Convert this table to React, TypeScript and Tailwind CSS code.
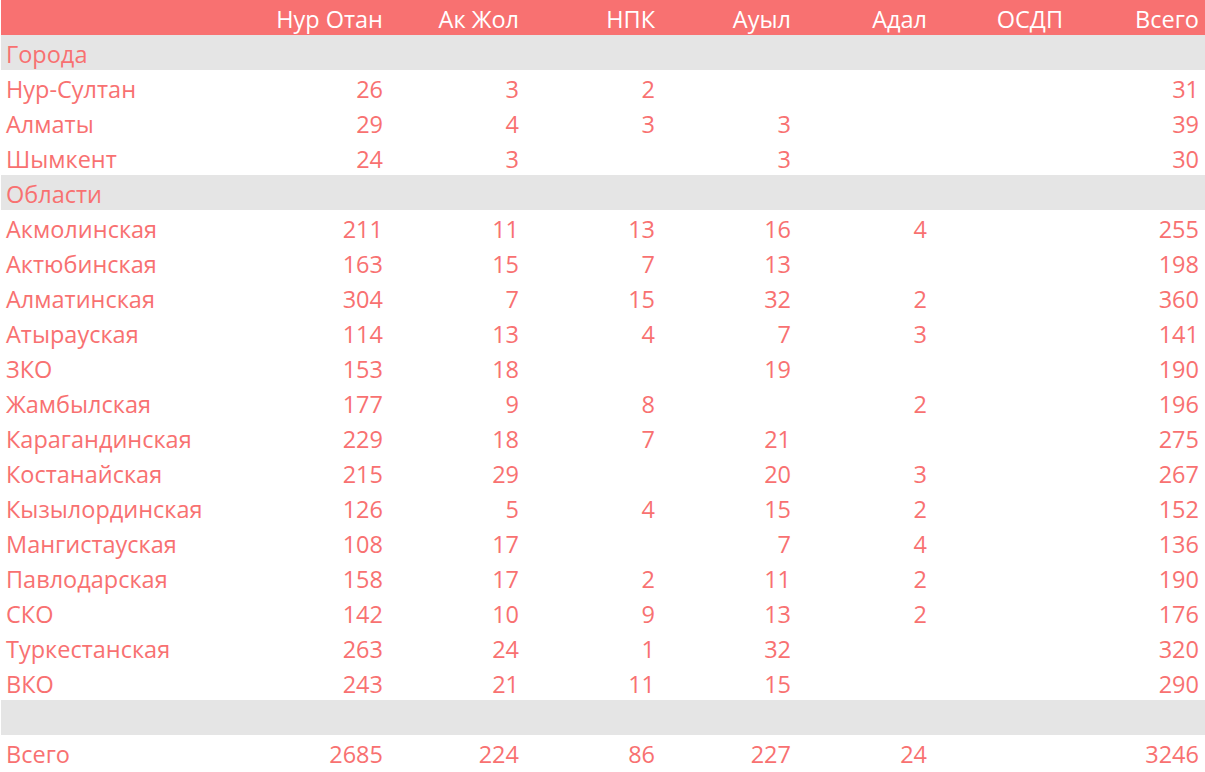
import React from "react";

const cols = ["Нур Отан", "Ак Жол", "НПК", "Ауыл", "Адал", "ОСДП", "Всего"];

type Row = { name: string; vals?: (number | null)[]; band?: boolean };

const rows: Row[] = [
  { name: "Города", band: true },
  { name: "Нур-Султан", vals: [26, 3, 2, null, null, null, 31] },
  { name: "Алматы", vals: [29, 4, 3, 3, null, null, 39] },
  { name: "Шымкент", vals: [24, 3, null, 3, null, null, 30] },
  { name: "Области", band: true },
  { name: "Акмолинская", vals: [211, 11, 13, 16, 4, null, 255] },
  { name: "Актюбинская", vals: [163, 15, 7, 13, null, null, 198] },
  { name: "Алматинская", vals: [304, 7, 15, 32, 2, null, 360] },
  { name: "Атырауская", vals: [114, 13, 4, 7, 3, null, 141] },
  { name: "ЗКО", vals: [153, 18, null, 19, null, null, 190] },
  { name: "Жамбылская", vals: [177, 9, 8, null, 2, null, 196] },
  { name: "Карагандинская", vals: [229, 18, 7, 21, null, null, 275] },
  { name: "Костанайская", vals: [215, 29, null, 20, 3, null, 267] },
  { name: "Кызылординская", vals: [126, 5, 4, 15, 2, null, 152] },
  { name: "Мангистауская", vals: [108, 17, null, 7, 4, null, 136] },
  { name: "Павлодарская", vals: [158, 17, 2, 11, 2, null, 190] },
  { name: "СКО", vals: [142, 10, 9, 13, 2, null, 176] },
  { name: "Туркестанская", vals: [263, 24, 1, 32, null, null, 320] },
  { name: "ВКО", vals: [243, 21, 11, 15, null, null, 290] },
  { name: "", band: true },
  { name: "Всего", vals: [2685, 224, 86, 227, 24, null, 3246] },
];

const grid = "grid grid-cols-[251px_repeat(7,136px)] h-[35px] pt-[4px] items-center";

export default function App() {
  return (
    <div
      className="bg-white w-[1205px] h-[772px] pl-px text-[#f87171] text-[23.5px] leading-none"
      style={{ fontFamily: '"Open Sans", "Liberation Sans", sans-serif' }}
    >
      <div className={`${grid} bg-[#f87171] text-white`}>
        <div />
        {cols.map((c) => (
          <div key={c} className="text-right pr-[5px]">{c}</div>
        ))}
      </div>
      {rows.map((r, i) =>
        r.band ? (
          <div key={i} className={`${grid} bg-[#e5e5e5]`}>
            <div className="pl-[5px]">{r.name}</div>
          </div>
        ) : (
          <div key={i} className={grid}>
            <div className="pl-[5px] whitespace-nowrap">{r.name}</div>
            {r.vals!.map((v, j) => (
              <div key={j} className="text-right pr-[5px]">{v ?? ""}</div>
            ))}
          </div>
        )
      )}
    </div>
  );
}
